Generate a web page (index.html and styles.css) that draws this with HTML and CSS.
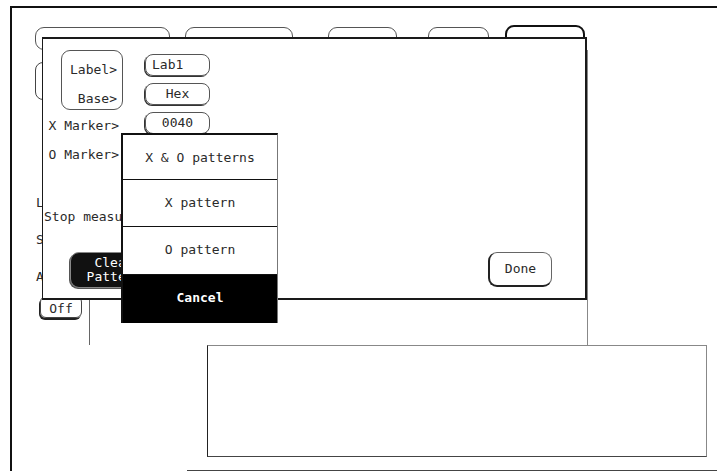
FILE: index.html
```html
<!DOCTYPE html>
<html lang="en">
<head>
  <meta charset="UTF-8" />
  <title>Pattern Marker Setup</title>
  <link rel="stylesheet" href="styles.css">
</head>
<body>
  <div class="screen">
    <div class="tabs">
      <div class="tab t1"></div>
      <div class="tab t2"></div>
      <div class="tab t3"></div>
      <div class="tab t4"></div>
      <div class="tab t5"></div>
    </div>

    <div class="panel">
      <div class="side">
        <div class="side-btn"></div>
        <div class="side-labels">
          <span>L</span>
          <span>S</span>
          <span>A</span>
        </div>
        <div class="off-btn">Off</div>
      </div>
      <div class="mid"></div>
    </div>
    <div class="chart"></div>
    <div class="baseline"></div>

    <div class="dialog">
      <div class="form">
        <div class="label-box">
          <span>Label&gt;</span>
          <span>Base&gt;</span>
        </div>
        <div class="field">Lab1</div>
        <div class="field center">Hex</div>
        <div class="lbl">X Marker&gt;</div>
        <div class="field center">0040</div>
        <div class="lbl">O Marker&gt;</div>
      </div>
      <p class="stop">Stop measurement on pattern</p>
      <div class="actions">
        <div class="clear-btn">Clear<br>Pattern</div>
        <div class="done-btn">Done</div>
      </div>
    </div>

    <div class="menu">
      <div class="item i1">X &amp; O patterns</div>
      <div class="item i2">X pattern</div>
      <div class="item i3">O pattern</div>
      <div class="item cancel">Cancel</div>
    </div>
  </div>
</body>
</html>
```

FILE: styles.css
```css
body {
  margin: 0;
  background: #fff;
  font-family: "DejaVu Sans Mono", "Liberation Mono", monospace;
  font-size: 13px;
  color: #2a2a2a;
}
.screen {
  position: relative;
  margin: 6px 0 0 10px;
  width: 707px;
  height: 465px;
  border-top: 2px solid #111;
  border-left: 2px solid #111;
}

/* tab strip behind the dialog */
.tabs {
  display: flex;
  align-items: flex-start;
  padding: 17px 0 0 23px;
  height: 25px;
}
.tab {
  box-sizing: border-box;
  height: 23px;
  margin-top: 2px;
  border: 1px solid #555;
  border-radius: 9px;
}
.t1 { width: 135px; }
.t2 { width: 108px; margin-left: 15px; }
.t3 { width: 69px; margin-left: 35px; }
.t4 { width: 61px; margin-left: 31px; }
.t5 { width: 80px; margin-left: 16px; height: 25px; margin-top: 0; border: 2px solid #111; }

.panel {
  display: flex;
  height: 295px;
}
.side {
  width: 77px;
  border-right: 1px solid #666;
}
.side-btn {
  box-sizing: border-box;
  width: 60px;
  height: 38px;
  margin: 12px 0 0 23px;
  border: 1px solid #444;
  border-radius: 8px;
}
.side-labels {
  display: flex;
  flex-direction: column;
  align-items: flex-start;
  gap: 23px;
  margin: 96px 0 0 24px;
  line-height: 14px;
}
.off-btn {
  box-sizing: border-box;
  width: 42px;
  height: 22px;
  margin: 12px 0 0 28px;
  border: 1px solid #444;
  border-radius: 6px;
  box-shadow: -1px 2px 0 #222;
  text-align: center;
  line-height: 24px;
}
.mid {
  width: 497px;
  border-right: 1px solid #888;
}
.chart {
  box-sizing: border-box;
  width: 500px;
  height: 112px;
  margin-left: 195px;
  border: 1px solid #888;
  border-left-color: #222;
  border-bottom-color: #444;
}
.baseline {
  margin: 13px 0 0 175px;
  border-top: 1px solid #444;
}

/* dialog */
.dialog {
  position: absolute;
  left: 30px;
  top: 29px;
  z-index: 2;
  box-sizing: border-box;
  width: 545px;
  height: 263px;
  background: #fff;
  border: 2px solid #1a1a1a;
  border-left-width: 1px;
  padding-left: 1px;
}
.form {
  display: grid;
  grid-template-columns: 79px 65px;
  grid-auto-rows: 22px;
  column-gap: 22px;
  row-gap: 7px;
  margin-top: 15px;
}
.label-box {
  grid-row: 1 / 3;
  display: flex;
  flex-direction: column;
  gap: 15px;
  align-items: flex-end;
  margin: -4px 0 -5px 17px;
  padding: 12px 5px 0 0;
  border: 1px solid #555;
  border-radius: 9px;
  line-height: 14px;
}
.lbl {
  align-self: end;
  text-align: right;
  padding-right: 4px;
  line-height: 16px;
}
.field {
  box-sizing: border-box;
  border: 1px solid #555;
  border-radius: 8px;
  box-shadow: -1px 1px 0 #333;
  padding-left: 6px;
  line-height: 19px;
}
.field.center {
  padding-left: 0;
  text-align: center;
}
.stop {
  margin: 46px 0 0;
  line-height: 16px;
  white-space: nowrap;
}
.actions {
  display: flex;
  justify-content: space-between;
  align-items: flex-start;
  margin: 27px 33px 0 26px;
}
.clear-btn {
  box-sizing: border-box;
  width: 88px;
  height: 36px;
  padding-top: 3px;
  background: #111;
  color: #fff;
  border: 1px solid #888;
  border-radius: 9px;
  box-shadow: -1px 1px 0 #555;
  text-align: center;
  line-height: 14px;
}
.done-btn {
  box-sizing: border-box;
  width: 64px;
  height: 35px;
  border: 1px solid #666;
  border-left: 2px solid #222;
  border-bottom: 2px solid #222;
  border-radius: 9px;
  text-align: center;
  line-height: 32px;
}

/* pop-up menu */
.menu {
  position: absolute;
  left: 109px;
  top: 125px;
  z-index: 3;
  width: 154px;
  background: #fff;
  border-top: 2px solid #111;
  border-left: 2px solid #111;
  border-right: 1px solid #777;
}
.item {
  box-sizing: border-box;
  height: 47px;
  border-bottom: 1px solid #111;
  text-align: center;
  line-height: 46px;
}
.i1 { height: 45px; }
.i3 { height: 48px; }
.cancel {
  height: 48px;
  border-bottom: 0;
  background: #000;
  color: #fff;
  font-weight: bold;
}
```
